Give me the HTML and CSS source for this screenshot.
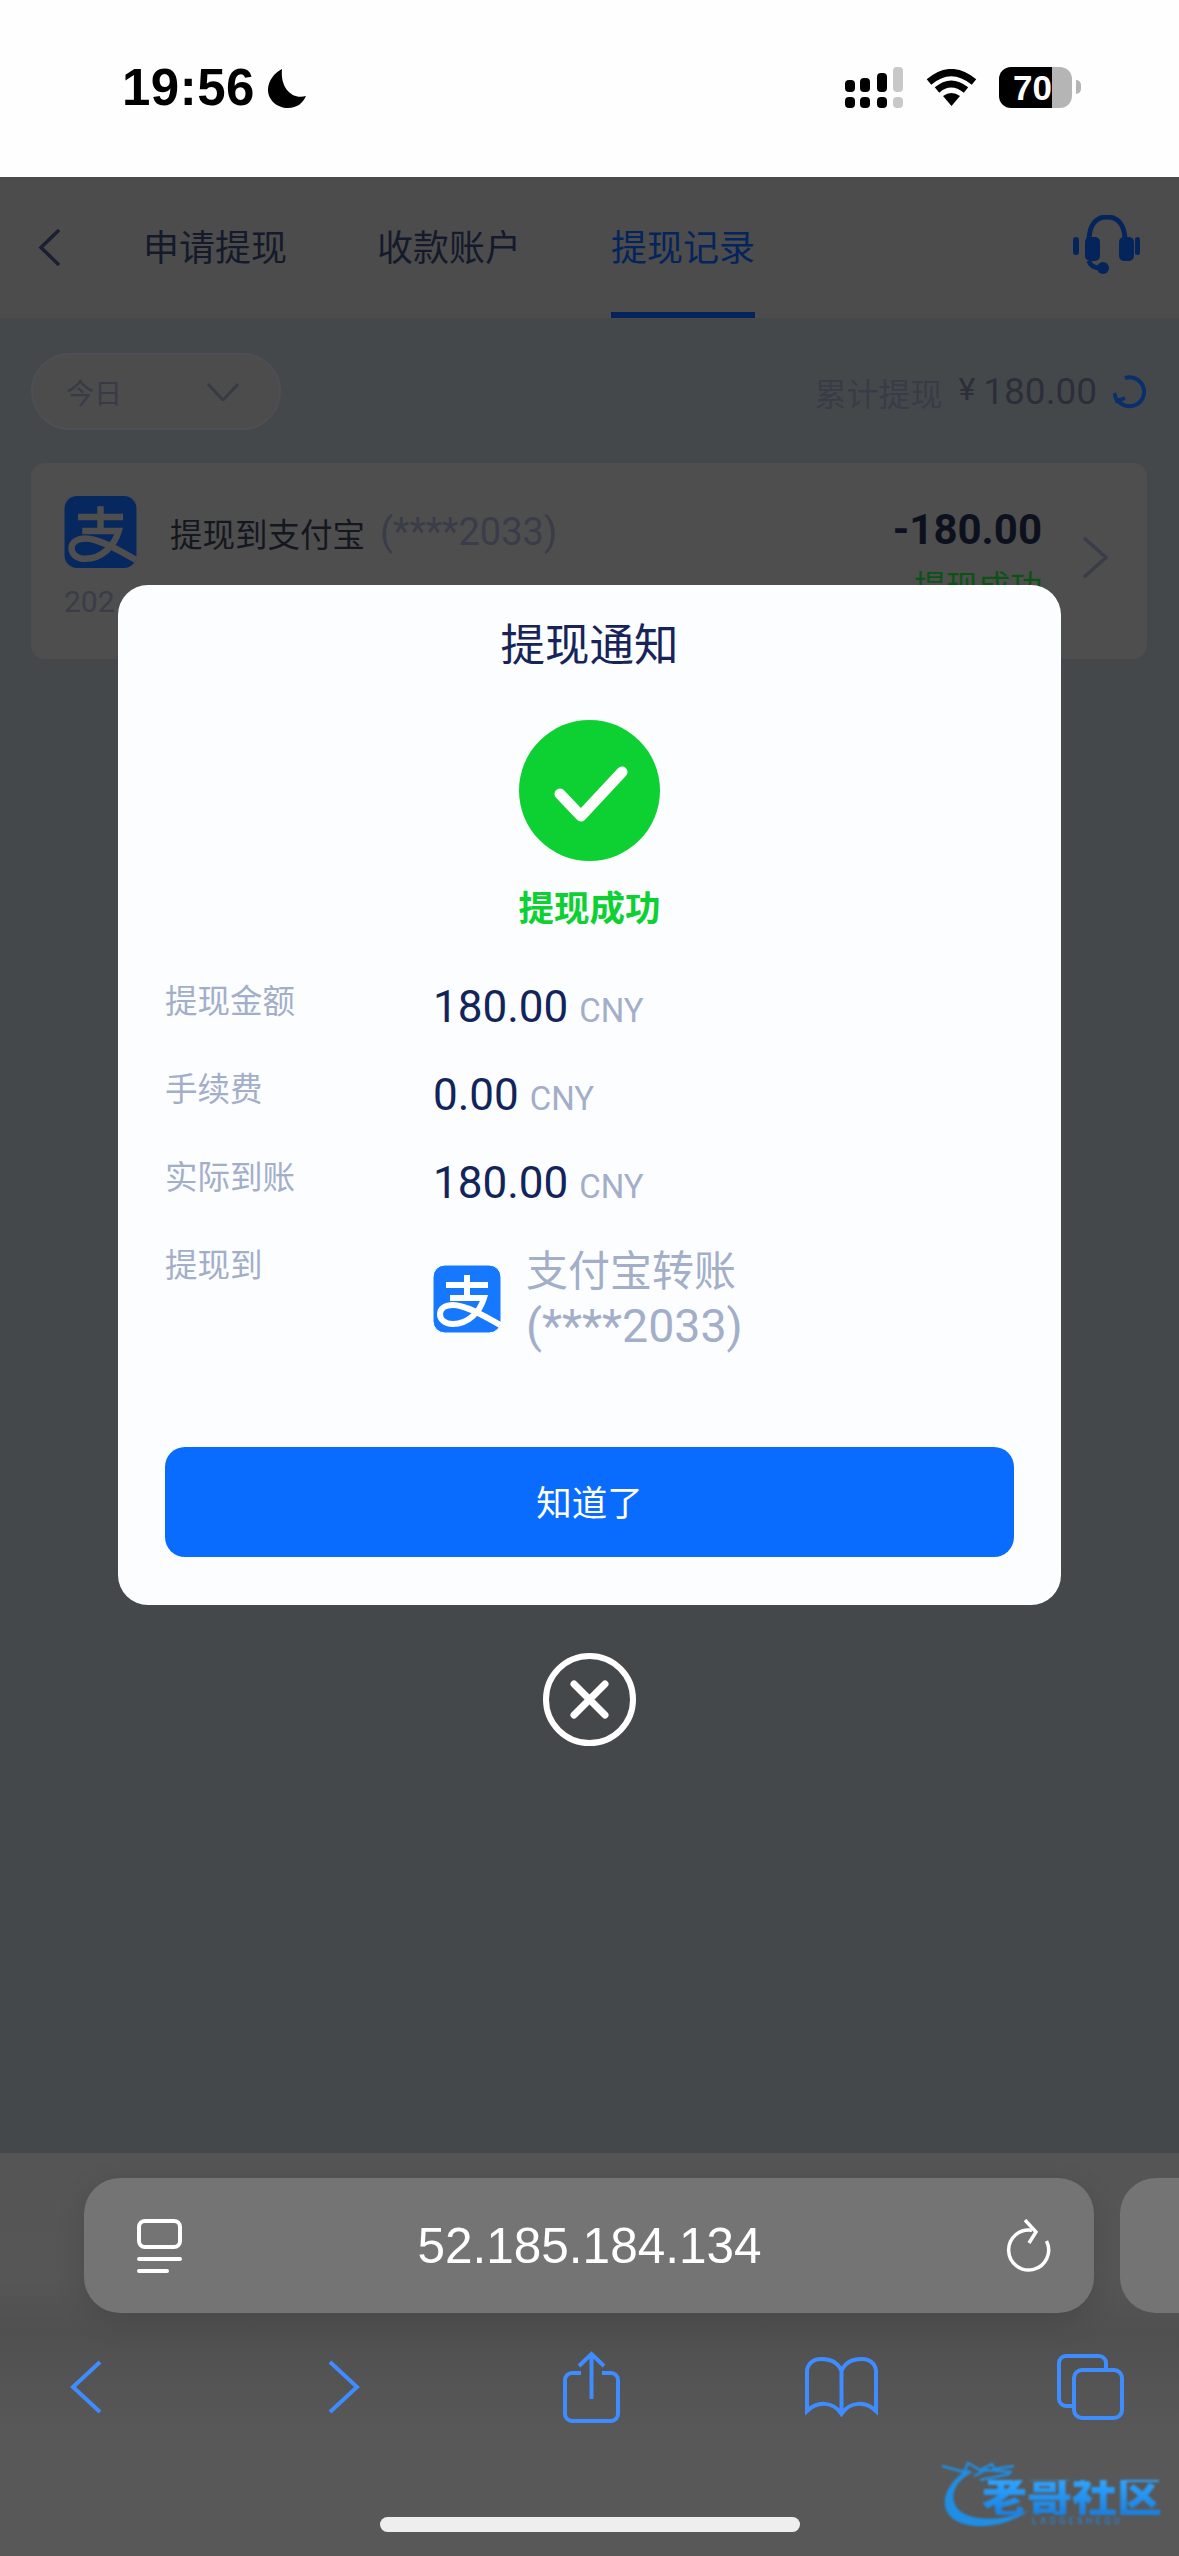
FILE: index.html
```html
<!DOCTYPE html>
<html lang="zh-CN">
  <head>
    <meta charset="UTF-8">
    <meta name="viewport" content="width=device-width, initial-scale=1.0">
    <title>提现记录</title>
    <link rel="stylesheet" href="styles.css">
  </head>
  <body>
    <svg class="defs" width="0" height="0">
      <symbol id="alipay" viewBox="0 0 68 68">
        <path class="alipay-bg" d="M12 0H56A12 12 0 0 1 68 12V56A12 12 0 0 1 56 68H12A12 12 0 0 1 0 56V12A12 12 0 0 1 12 0Z"/>
        <path class="alipay-mark" d="M13 20H55M34 10V33M17 33H51C47 47 35 59 20 59C11 59 7 54 7 49C7 43 13 40 20 40C32 40 50 50 67 60"/>
      </symbol>
    </svg>

    <div class="status">
      <div class="status-left">
        <span class="time">19:56</span>
        <svg class="moon" viewBox="0 0 38 39"><path d="M14 0C6 4 0 12 0 21C0 31 9 39 20 39C29 39 35 34 38 27C25 31 12 20 14 0Z"/></svg>
      </div>
      <div class="status-right">
        <svg class="signal" viewBox="0 0 59 41">
          <rect x="0" y="13" width="10" height="12" rx="4"/>
          <rect x="0" y="30" width="10" height="11" rx="4"/>
          <rect x="15" y="11" width="10" height="14" rx="4"/>
          <rect x="15" y="30" width="10" height="11" rx="4"/>
          <rect x="32" y="6" width="10" height="19" rx="4"/>
          <rect x="32" y="30" width="10" height="11" rx="4"/>
          <rect class="off" x="48" y="0" width="10" height="25" rx="4"/>
          <rect class="off" x="48" y="30" width="10" height="11" rx="4"/>
        </svg>
        <svg class="wifi" viewBox="0 0 51 37">
          <path class="wifi-arc" d="M3 13Q25 -6 48 13"/>
          <path class="wifi-arc" d="M11 21Q25 9 40 21"/>
          <path d="M25.500 37L17 27Q25.500 21 34 27Z"/>
        </svg>
        <div class="battery"><span>70</span></div>
        <div class="battery-nub"></div>
      </div>
    </div>

    <nav class="nav">
      <svg class="nav-back" viewBox="0 0 23 37"><path d="M21 1L3 18.500L21 36"/></svg>
      <a class="tab">申请提现</a>
      <a class="tab">收款账户</a>
      <a class="tab active">提现记录</a>
      <svg class="headset" viewBox="0 0 67 60">
        <path class="headset-band" d="M16 26C16 9 24 2 34 2C44 2 52 9 52 26"/>
        <rect x="0" y="22" width="6" height="18" rx="3"/>
        <rect x="12" y="22" width="15" height="24" rx="5"/>
        <rect x="46" y="22" width="15" height="24" rx="5"/>
        <rect x="62" y="22" width="5" height="18" rx="2.500"/>
        <path class="headset-band" d="M16 46C17 50 21 53 27 53"/>
        <circle cx="30" cy="53" r="6"/>
      </svg>
    </nav>

    <main class="content">
      <div class="filter-row">
        <div class="pill">
          <span>今日</span>
          <svg class="pill-arrow" viewBox="0 0 32 18"><path d="M1 1L16 17L31 1"/></svg>
        </div>
        <div class="total">
          <span class="total-label">累计提现</span>
          <span class="total-num">¥<span class="total-val">180.00</span></span>
          <svg class="refresh" viewBox="0 0 34 34"><path d="M12 3A14.500 14.500 0 1 1 4 24"/><path class="refresh-head" d="M1 18L4 26L12 23"/></svg>
        </div>
      </div>

      <div class="card">
        <div class="card-left">
          <div class="card-head">
            <svg class="card-icon"><use href="#alipay"/></svg>
            <span class="card-title">提现到支付宝</span>
            <span class="card-acct">(****2033)</span>
          </div>
          <div class="card-date">202</div>
        </div>
        <div class="card-right">
          <div class="card-amount">-180.00</div>
          <div class="card-state">提现成功</div>
        </div>
        <svg class="card-more" viewBox="0 0 26 41"><path d="M2 1L24 20.500L2 40"/></svg>
      </div>
    </main>

    <div class="browser">
      <div class="address-row">
        <div class="address">
          <svg class="tab-group" viewBox="0 0 45 54">
            <rect x="2" y="2" width="41" height="26" rx="6"/>
            <path d="M2 40H43M2 52H30"/>
          </svg>
          <span class="url">52.185.184.134</span>
          <svg class="reload" viewBox="0 0 47 53"><path d="M27 11.300A20 20 0 1 0 41.500 22"/><path d="M20 1L31 13L24 24"/></svg>
        </div>
        <div class="address-next"></div>
      </div>
      <div class="tools">
        <svg class="tool back" viewBox="0 0 32 54"><path d="M30 2L3 27L30 52"/></svg>
        <svg class="tool forward" viewBox="0 0 32 54"><path d="M2 2L29 27L2 52"/></svg>
        <svg class="tool share" viewBox="0 0 57 72">
          <path d="M18 22H9A7 7 0 0 0 2 29V63A7 7 0 0 0 9 70H48A7 7 0 0 0 55 63V29A7 7 0 0 0 48 22H39"/>
          <path d="M28.500 48V3M16 15L28.500 3L41 15"/>
        </svg>
        <svg class="tool book" viewBox="0 0 73 60">
          <path d="M36.500 14C33 5 25 2 16 2C8 2 2 7 2 15V54C12 44 28 44 36.500 57C45 44 61 44 71 54V15C71 7 65 2 57 2C48 2 40 5 36.500 14V57"/>
        </svg>
        <svg class="tool tabs" viewBox="0 0 67 66">
          <path d="M15 52H9A7 7 0 0 1 2 45V9A7 7 0 0 1 9 2H42A7 7 0 0 1 49 9V15"/>
          <rect x="17" y="16" width="48" height="48" rx="8"/>
        </svg>
      </div>
      <div class="home-bar"></div>
    </div>

    <div class="overlay">
      <div class="modal">
        <h2 class="modal-title">提现通知</h2>
        <div class="ok-circle">
          <svg class="ok-check" viewBox="0 0 74 56"><path d="M6 28L27 50L68 6"/></svg>
        </div>
        <div class="ok-text">提现成功</div>

        <div class="row">
          <div class="row-label">提现金额</div>
          <div class="row-value">180.00<span class="unit">CNY</span></div>
        </div>
        <div class="row">
          <div class="row-label">手续费</div>
          <div class="row-value">0.00<span class="unit">CNY</span></div>
        </div>
        <div class="row">
          <div class="row-label">实际到账</div>
          <div class="row-value">180.00<span class="unit">CNY</span></div>
        </div>
        <div class="row row-last">
          <div class="row-label">提现到</div>
          <div class="row-pay">
            <svg class="pay-icon"><use href="#alipay"/></svg>
            <div class="pay-text">支付宝转账<br><span class="pay-acct">(****2033)</span></div>
          </div>
        </div>

        <button class="modal-btn">知道了</button>
      </div>
      <svg class="close" viewBox="0 0 93 93">
        <circle cx="46.500" cy="46.500" r="43.500"/>
        <path d="M31 31L62 62M62 31L31 62"/>
      </svg>
    </div>

    <div class="mark">
      <svg class="mark-dragon" viewBox="0 0 110 70">
        <path class="mark-fill" d="M27 10C8 22 -2 42 10 56C22 69 58 72 90 50C62 62 28 62 17 48C8 36 16 20 33 12Z"/>
        <path class="mark-line" d="M2 6L24 12L28 3L40 10L52 4L54 9L74 6M34 16L46 10L72 12M40 20L70 14"/>
      </svg>
      <div class="mark-text">老哥社区</div>
      <div class="mark-sub">LAOGESHEQU</div>
    </div>
  </body>
</html>
```

FILE: styles.css
```css
* {
  box-sizing: border-box;
}

html,
body {
  margin: 0;
  padding: 0;
}

body {
  position: relative;
  display: flex;
  flex-direction: column;
  width: 1179px;
  height: 2556px;
  overflow: hidden;
  background-color: #45484b;
  font-family: Roboto, "Noto Sans CJK SC", sans-serif;
}

.defs {
  position: absolute;
}

.alipay-mark {
  fill: none;
  stroke-width: 6;
}

/* status bar */
.status {
  display: flex;
  justify-content: space-between;
  height: 177px;
  padding: 67px 98px 0 122px;
  background-color: #fefefe;
  color: #000;
}

.status-left {
  display: flex;
  align-items: flex-start;
}

.time {
  width: 146px;
  font-family: "Liberation Sans", sans-serif;
  font-size: 51px;
  font-weight: 700;
  letter-spacing: 0.500px;
  line-height: 41px;
}

.moon {
  width: 38px;
  height: 39px;
  margin-top: 2px;
}

.status-right {
  display: flex;
  align-items: flex-start;
}

.signal {
  width: 59px;
  height: 41px;
}

.signal .off {
  fill: #c8c8c8;
}

.wifi {
  width: 51px;
  height: 37px;
  margin: 2px 22px 0;
}

.wifi-arc {
  fill: none;
  stroke: #000;
  stroke-width: 7;
}

.battery {
  display: flex;
  align-items: center;
  justify-content: center;
  width: 73px;
  height: 41px;
  padding-right: 6px;
  border-radius: 12px;
  background: linear-gradient(90deg, #000 72%, #b5b5b5 72%);
  color: #fff;
  font-family: "Liberation Sans", sans-serif;
  font-size: 35px;
  font-weight: 700;
}

.battery-nub {
  width: 5px;
  height: 14px;
  margin: 13px 0 0 4px;
  border-radius: 0 5px 5px 0;
  background-color: #b5b5b5;
}

/* nav */
.nav {
  display: flex;
  align-items: center;
  height: 143px;
  padding-left: 38px;
  background-color: #4c4c4c;
  border-bottom: 2px solid #47484c;
}

.nav-back {
  flex: none;
  width: 23px;
  height: 37px;
  margin-right: 82px;
  fill: none;
  stroke: #1b2030;
  stroke-width: 3.500;
}

.tab {
  display: flex;
  align-items: center;
  flex: none;
  height: 141px;
  margin-right: 90px;
  border-bottom: 6px solid transparent;
  color: #151a2b;
  font-size: 36px;
  white-space: nowrap;
}

.tab.active {
  color: #06245c;
  border-bottom-color: #06245c;
}

.headset {
  flex: none;
  width: 67px;
  height: 60px;
  margin-top: -6px;
  margin-left: 228px;
  fill: #06245c;
}

.headset-band {
  fill: none;
  stroke: #06245c;
  stroke-width: 5;
}

/* list */
.content {
  flex: 1;
  padding: 33px 32px 0 31px;
}

.filter-row {
  display: flex;
  align-items: center;
  justify-content: space-between;
  height: 77px;
}

.pill {
  display: flex;
  align-items: center;
  justify-content: space-between;
  width: 250px;
  height: 77px;
  padding: 0 40px 0 33px;
  border: 2px solid #4e4f56;
  border-radius: 39px;
  background-color: #4c4c4c;
  color: #383b46;
  font-size: 28px;
}

.pill-arrow {
  width: 32px;
  height: 18px;
  fill: none;
  stroke: #383b46;
  stroke-width: 3;
}

.total {
  display: flex;
  align-items: center;
  color: #393c46;
}

.total-label {
  font-size: 32px;
}

.total-num {
  display: flex;
  margin-left: 16px;
  color: #2c2f39;
  font-size: 32px;
}

.total-val {
  margin-left: 8px;
  font-size: 37px;
}

.refresh {
  width: 34px;
  height: 34px;
  margin-left: 16px;
  fill: none;
  stroke: #0a2f6a;
  stroke-width: 4;
}

.card {
  display: flex;
  align-items: flex-start;
  height: 196px;
  margin-top: 33px;
  padding: 32px 39px 0 33px;
  border-radius: 14px;
  background-color: #4e4e4e;
}

.card-left {
  flex: 1;
}

.card-head {
  display: flex;
  align-items: center;
}

.card-icon {
  width: 73px;
  height: 74px;
  fill: #06285f;
  stroke: #4e4e4e;
}

.card-title {
  margin-left: 33px;
  color: #15171f;
  font-size: 32.500px;
}

.card-acct {
  margin-left: 15px;
  color: #3a3c47;
  font-size: 38px;
}

.card-date {
  margin-top: 12px;
  color: #3a3c47;
  font-size: 30px;
  line-height: 42px;
}

.card-right {
  text-align: right;
}

.card-amount {
  color: #0d111e;
  font-size: 42px;
  font-weight: 700;
  line-height: 70px;
}

.card-state {
  color: #0a5314;
  font-size: 32px;
  line-height: 44px;
}

.card-more {
  width: 26px;
  height: 41px;
  margin: 42px 0 0 40px;
  fill: none;
  stroke: #3a3c47;
  stroke-width: 3.500;
}

/* safari bar */
.browser {
  height: 403px;
  background: linear-gradient(180deg, #555 0%, #565656 30%, #505050 45%, #585858 70%);
}

.address-row {
  display: flex;
  margin-top: 25px;
  padding-left: 84px;
}

.address {
  display: flex;
  align-items: center;
  justify-content: space-between;
  flex: none;
  width: 1010px;
  height: 135px;
  padding: 0 42px 0 53px;
  border-radius: 36px;
  background-color: #747474;
  box-shadow: 0 8px 30px rgba(0, 0, 0, 0.12);
}

.address-next {
  flex: none;
  width: 100px;
  height: 135px;
  margin-left: 26px;
  border-radius: 36px 0 0 36px;
  background-color: #747474;
}

.tab-group {
  width: 45px;
  height: 54px;
  fill: none;
  stroke: #fff;
  stroke-width: 4;
  stroke-linecap: round;
}

.url {
  margin-left: -8px;
  color: #fff;
  font-family: "Liberation Sans", sans-serif;
  font-size: 49.500px;
}

.reload {
  width: 47px;
  height: 53px;
  fill: none;
  stroke: #fff;
  stroke-width: 3.500;
}

.tools {
  display: flex;
  align-items: center;
  height: 74px;
  margin-top: 37px;
}

.tool {
  flex: none;
  fill: none;
  stroke: #3f8cff;
  stroke-width: 4;
}

.tool.back {
  width: 32px;
  height: 54px;
  margin-left: 70px;
}

.tool.forward {
  width: 32px;
  height: 54px;
  margin-left: 226px;
}

.tool.share {
  width: 57px;
  height: 72px;
  margin-left: 203px;
}

.tool.book {
  width: 73px;
  height: 60px;
  margin-left: 185px;
}

.tool.tabs {
  width: 67px;
  height: 66px;
  margin-left: 179px;
}

.home-bar {
  width: 420px;
  height: 15px;
  margin: 93px 0 0 380px;
  border-radius: 8px;
  background-color: #eee;
}

/* dialog */
.overlay {
  position: absolute;
  top: 0;
  left: 0;
  display: flex;
  flex-direction: column;
  align-items: center;
  width: 1179px;
  padding-top: 585px;
}

.modal {
  display: flex;
  flex-direction: column;
  width: 943px;
  height: 1020px;
  padding: 31px 47px 47px;
  border-radius: 30px;
  background-color: #fcfdff;
}

.modal-title {
  margin: 0;
  color: #16245a;
  font-size: 44.500px;
  font-weight: 400;
  line-height: 60px;
  text-align: center;
}

.ok-circle {
  display: flex;
  align-items: center;
  justify-content: center;
  flex: none;
  width: 141px;
  height: 141px;
  margin: 44px auto 0;
  border-radius: 50%;
  background-color: #0dd132;
}

.ok-check {
  width: 74px;
  height: 56px;
  margin: 6px 0 0 2px;
  fill: none;
  stroke: #fff;
  stroke-width: 11;
  stroke-linecap: round;
  stroke-linejoin: round;
}

.ok-text {
  margin: 23px 0 43px;
  color: #0dd132;
  font-size: 35.500px;
  font-weight: 700;
  line-height: 50px;
  text-align: center;
}

.row {
  display: flex;
  height: 60px;
  margin-bottom: 28px;
}

.row-last {
  height: 114px;
}

.row-label {
  width: 268px;
  color: #a3aec8;
  font-size: 32.500px;
  line-height: 50px;
}

.row-value {
  color: #12245a;
  font-size: 44px;
  line-height: 60px;
}

.unit {
  margin-left: 11px;
  color: #a3aec8;
  font-size: 33px;
}

.row-pay {
  display: flex;
  align-items: center;
  padding-top: 2px;
}

.pay-icon {
  width: 68px;
  height: 68px;
  fill: #1677ff;
  stroke: #fff;
}

.pay-text {
  margin-left: 25px;
  color: #a3aec8;
  font-size: 42px;
  line-height: 55px;
}

.pay-acct {
  font-size: 46.500px;
}

.modal-btn {
  flex: none;
  width: 849px;
  height: 110px;
  margin-top: 64px;
  padding-bottom: 5px;
  border: none;
  border-radius: 20px;
  background-color: #0a6cff;
  color: #fff;
  font-family: inherit;
  font-size: 35.500px;
}

.close {
  width: 93px;
  height: 93px;
  margin-top: 48px;
  fill: none;
  stroke: #fff;
  stroke-width: 6;
}

.close path {
  stroke-width: 7;
  stroke-linecap: round;
}

/* watermark */
.mark {
  position: absolute;
  top: 2460px;
  left: 940px;
  width: 225px;
  height: 72px;
  filter: blur(0.8px);
}

.mark-dragon {
  position: absolute;
  top: 0;
  left: 0;
  width: 110px;
  height: 70px;
}

.mark-fill {
  fill: #1f8fe6;
}

.mark-line {
  fill: none;
  stroke: #1f8fe6;
  stroke-width: 2.500;
}

.mark-text {
  position: absolute;
  top: 20px;
  left: 42px;
  background: linear-gradient(180deg, #2fa5ff, #1a80e0);
  -webkit-background-clip: text;
  background-clip: text;
  color: transparent;
  font-size: 45px;
  font-weight: 900;
  line-height: 35px;
  white-space: nowrap;
}

.mark-sub {
  position: absolute;
  top: 56px;
  left: 92px;
  color: #1f8fe6;
  font-size: 9px;
  line-height: 10px;
  letter-spacing: 3.400px;
  white-space: nowrap;
}
```
